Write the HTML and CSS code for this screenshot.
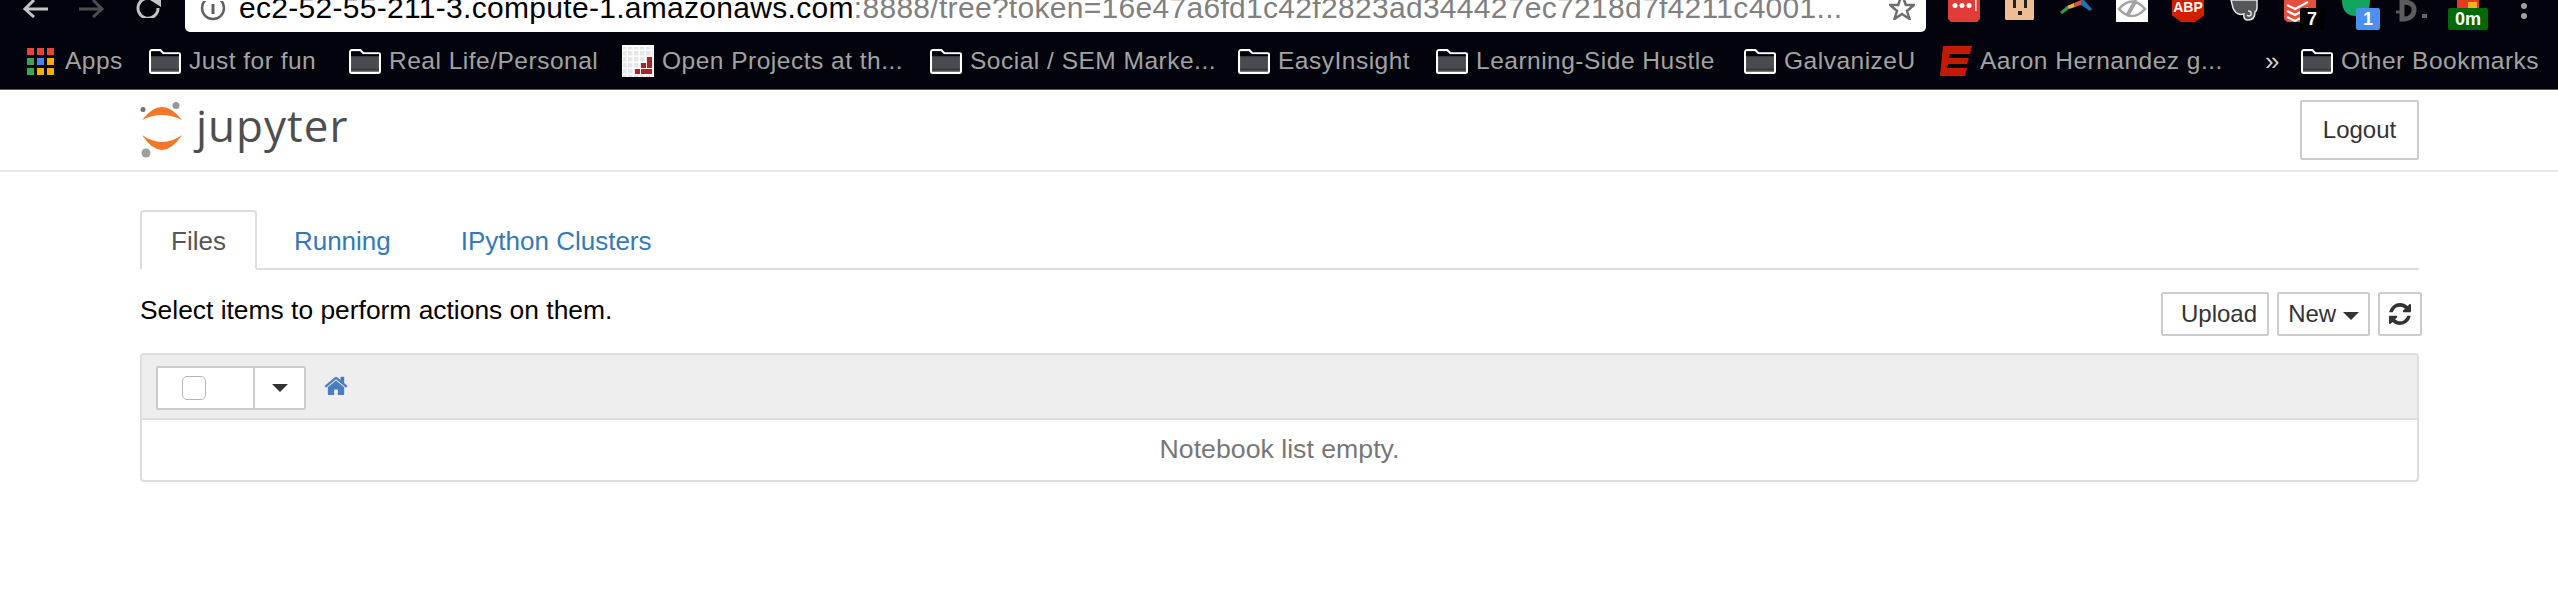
FILE: index.html
```html
<!DOCTYPE html>
<html lang="en">
<head>
    <meta charset="UTF-8">
    <title>Home - Jupyter</title>
    <link rel="stylesheet" href="styles.css">
</head>
<body>
    <svg class="defs" width="0" height="0">
        <symbol id="folder" viewBox="0 0 31 24">
            <path d="M1 3.500q0-2.500 2-2.500h8l3 3h15q1 0 1 1v17q0 1-1 1H2q-1 0-1-1z" fill="#4a4b50" stroke="#fff" stroke-width="2"/>
            <path d="M2 2h8.500l3 3H29v2H2z" fill="#02030d"/>
            <path d="M2 19h27v1H2z" fill="#2f3034"/>
        </symbol>
    </svg>

    <div class="browser">
        <div class="toolbar">
            <div class="nav">
                <svg class="nav-icon" viewBox="0 0 27 18"><path d="M26 9H3M12 0 3 9l9 8" fill="none" stroke="#c4c4c4" stroke-width="3"/></svg>
                <svg class="nav-icon" viewBox="0 0 27 18"><path d="M1 9h23M15 0l9 9-9 8" fill="none" stroke="#4d4d4d" stroke-width="3"/></svg>
                <svg class="nav-icon" viewBox="0 0 27 18"><path d="M21 3A10 10 0 1 0 24 10" transform="translate(0 -2)" fill="none" stroke="#c4c4c4" stroke-width="3"/><path d="M16 0h11v7z" fill="#c4c4c4"/></svg>
            </div>
            <div class="omnibox">
                <svg class="info" viewBox="0 0 26 20"><circle cx="13" cy="7" r="11" fill="none" stroke="#5f5f5f" stroke-width="2.500"/><path d="M11.500 3h3v10h-3z" fill="#5f5f5f"/></svg>
                <span class="url"><span class="host">ec2-52-55-211-3.compute-1.amazonaws.com</span>:8888/tree?token=16e47a6fd1c42f2823ad344427ec7218d7f4211c4001...</span>
                <svg class="star" viewBox="0 0 26 20"><path d="m13-6 3.800 11H25l-7 6 2.500 8-7.500-5-7.500 5L8 11 1 5h8.200z" fill="none" stroke="#6e6e6e" stroke-width="2.500"/></svg>
            </div>
            <div class="extensions">
                <div class="ext"><svg class="ext-svg" viewBox="0 0 32 22"><path d="M0 0h32v19l-3 3H3l-3-3z" fill="#e23c39"/><circle cx="7" cy="5.500" r="2.500" fill="#fff"/><circle cx="14" cy="5.500" r="2.500" fill="#fff"/><circle cx="21" cy="5.500" r="2.500" fill="#fff"/><path d="M27 0h1.500v11H27z" fill="#fff"/></svg></div>
                <div class="ext"><svg class="ext-svg" viewBox="0 0 32 22"><path d="M1 0h29v19l-1 1H2l-1-1z" fill="#eebd93"/><path d="M9 0h3v8H9zM20 0h3v8h-3zM14 11h4v4h-4z" fill="#222"/></svg></div>
                <div class="ext"><svg class="ext-svg" viewBox="0 0 32 22"><path d="M0 12 7 6l2 3-7 5z" fill="#2f9e5b"/><path d="M7 6l7-3 1 4-6 2z" fill="#e8b33a"/><path d="m14 3 7-3v5l-6 2z" fill="#d8503f"/><path d="M21 0h3l8 9-2 2-9-6z" fill="#1f73b5"/></svg></div>
                <div class="ext"><svg class="ext-svg" viewBox="0 0 32 22"><path d="M0 0h32v22H0z" fill="#fff"/><path d="M3 9q13-15 26 0-6 7-13 7T3 9z" fill="none" stroke="#a3a3a3" stroke-width="2.500"/><path d="M20 0 11 16" stroke="#a3a3a3" stroke-width="4"/></svg></div>
                <div class="ext"><div class="ext-abp">ABP</div></div>
                <div class="ext"><svg class="ext-svg" viewBox="0 0 32 22"><path d="M3 0h26v8q0 3-2 4 0 8-7 8-5 0-4-6-8 2-11-6z" fill="#55575a" stroke="#e6e6e6" stroke-width="1.500"/><path d="M20 11q4 0 3 4-2 2-4 0" fill="none" stroke="#e6e6e6" stroke-width="1.500"/></svg></div>
                <div class="ext">
                    <svg class="ext-svg" viewBox="0 0 32 22"><path d="M0 0h32v19l-3 3H3l-3-3z" fill="#e4503f"/><path d="m3 5 8 4 13-7M3 11l8 4 13-7M3 17l8 4 13-7" fill="none" stroke="#fff" stroke-width="2"/></svg>
                    <span class="badge badge-black">7</span>
                </div>
                <div class="ext">
                    <svg class="ext-svg" viewBox="0 0 32 22"><path d="M2 0h28q0 16-14 16T2 0z" fill="#12a55f"/></svg>
                    <span class="badge badge-blue">1</span>
                </div>
                <div class="ext"><svg class="ext-svg" viewBox="0 0 32 22"><path d="M0 12h8" stroke="#555" stroke-width="3"/><path d="M6 2h3q10 1 9 9-1 7-9 8H6z" fill="none" stroke="#5c5c5c" stroke-width="5"/><path d="M26 14h5v4h-5z" fill="#666"/></svg></div>
                <div class="ext">
                    <svg class="ext-svg" viewBox="0 0 32 22"><path d="M5 0h22v8H5z" fill="#e53b25"/><path d="M16 2h9v6h-9z" fill="#f3b51c"/></svg>
                    <span class="badge badge-green">0m</span>
                </div>
                <div class="ext"><svg class="ext-svg" viewBox="0 0 32 22"><circle cx="16" cy="6" r="3" fill="#a0a0a0"/><circle cx="16" cy="16" r="3" fill="#a0a0a0"/></svg></div>
            </div>
        </div>

        <div class="bookmarks">
            <div class="mark mark-apps">
                <div class="apps-grid">
                    <i class="c-red"></i><i class="c-red"></i><i class="c-red"></i>
                    <i class="c-green"></i><i class="c-blue"></i><i class="c-yellow"></i>
                    <i class="c-green"></i><i class="c-yellow"></i><i class="c-yellow"></i>
                </div>
                Apps
            </div>
            <div class="mark mark-fun"><svg class="folder"><use href="#folder"/></svg>Just for fun</div>
            <div class="mark mark-personal"><svg class="folder"><use href="#folder"/></svg>Real Life/Personal</div>
            <div class="mark mark-long">
                <svg class="favicon" viewBox="0 0 32 32">
                    <defs>
                        <pattern id="cells" width="6" height="6" patternUnits="userSpaceOnUse">
                            <path d="M0 0h4.500v4.500H0z" fill="#e6e6e6"/>
                        </pattern>
                    </defs>
                    <path d="M0 0h32v32H0z" fill="#fff"/>
                    <path d="M1 2h30v30H1z" fill="url(#cells)"/>
                    <path d="M25 12h5v11h-5zM19 18h5v5h-5zM19 24h11v5H19zM13 24h5v5h-5z" fill="#a82525"/>
                </svg>
                Open Projects at th...
            </div>
            <div class="mark mark-long"><svg class="folder"><use href="#folder"/></svg>Social / SEM Marke...</div>
            <div class="mark mark-easy"><svg class="folder"><use href="#folder"/></svg>EasyInsight</div>
            <div class="mark mark-long"><svg class="folder"><use href="#folder"/></svg>Learning-Side Hustle</div>
            <div class="mark mark-galv"><svg class="folder"><use href="#folder"/></svg>GalvanizeU</div>
            <div class="mark mark-aaron">
                <svg class="espn" viewBox="0 0 32 30"><path d="M3 0h29l-2 8H10l-1 4h20l-2 6H8l-1 4h20l-2 8H0z" fill="#c41a04"/></svg>
                Aaron Hernandez g...
            </div>
            <div class="more">»</div>
            <div class="mark"><svg class="folder"><use href="#folder"/></svg>Other Bookmarks</div>
        </div>
    </div>

    <div class="header">
        <div class="logo">
            <svg class="logo-mark" viewBox="0 0 44 56">
                <path d="M2 18Q22-8 42 18 22 8 2 18zM2 33Q22 63 42 33 22 47 2 33z" fill="#f37726"/>
                <circle cx="36" cy="3.500" r="3.500" fill="#989798"/>
                <circle cx="3" cy="7.500" r="2.500" fill="#6f7070"/>
                <circle cx="6" cy="51" r="4.500" fill="#9e9e9e"/>
            </svg>
            <span class="logo-text">jupyter</span>
        </div>
        <button class="btn btn-logout">Logout</button>
    </div>

    <div class="main">
        <ul class="tabs">
            <li class="tab active">Files</li>
            <li class="tab">Running</li>
            <li class="tab">IPython Clusters</li>
        </ul>

        <div class="actions">
            <span class="hint">Select items to perform actions on them.</span>
            <div class="action-btns">
                <button class="btn btn-upload">Upload</button>
                <button class="btn btn-new">New <span class="caret"></span></button>
                <button class="btn btn-refresh">
                    <svg class="refresh" viewBox="0 0 1536 1536"><path fill="#333" d="M1511 928q0 5-1 7-64 268-268 434.500t-478 166.500q-146 0-282.500-55t-243.500-157l-129 129q-19 19-45 19t-45-19-19-45v-448q0-26 19-45t45-19h448q26 0 45 19t19 45-19 45l-137 137q71 66 161 102t187 36q134 0 250-65t186-179q11-17 53-117 8-23 30-23h192q13 0 22.500 9.500t9.500 22.500zm25-800v448q0 26-19 45t-45 19h-448q-26 0-45-19t-19-45 19-45l138-138q-148-137-349-137-134 0-250 65t-186 179q-11 17-53 117-8 23-30 23h-199q-13 0-22.500-9.500t-9.500-22.500v-7q65-268 270-434.500t480-166.500q146 0 284 55.500t245 156.500l130-129q19-19 45-19t45 19 19 45z"/></svg>
                </button>
            </div>
        </div>

        <div class="panel">
            <div class="panel-head">
                <div class="select-group">
                    <div class="select-box"><span class="checkbox"></span></div>
                    <div class="select-drop"><span class="caret"></span></div>
                </div>
                <svg class="home" viewBox="0 128 1664 1408"><path fill="#4a7dbd" d="M1408 992v480q0 26-19 45t-45 19h-384v-384h-256v384h-384q-26 0-45-19t-19-45v-480q0-1 .5-3t.5-3l575-474 575 474q1 2 1 6zm223-69l-62 74q-8 9-21 11h-3q-13 0-21-7l-692-577-692 577q-12 8-24 7-13-2-21-11l-62-74q-8-10-7-23.500t11-21.500l719-599q32-26 76-26t76 26l244 204v-195q0-14 9-23t23-9h192q14 0 23 9t9 23v408l219 182q10 8 11 21.500t-7 23.500z"/></svg>
            </div>
            <div class="panel-body">Notebook list empty.</div>
        </div>
    </div>
</body>
</html>
```

FILE: styles.css
```css
* {
    box-sizing: border-box;
}

body {
    margin: 0;
    background-color: #fff;
    font-family: "Liberation Sans", Arial, sans-serif;
    color: #000;
    overflow: hidden;
}

.defs {
    display: block;
    height: 0;
}

/* browser chrome */
.browser {
    background-color: #02030d;
    height: 90px;
    border-bottom: 1px solid #5a5a5a;
}

.toolbar {
    display: flex;
    align-items: flex-end;
    height: 33px;
    overflow: hidden;
}

.nav {
    display: flex;
    align-items: flex-start;
    width: 185px;
    height: 33px;
    padding-left: 22px;
    gap: 29px;
}

.nav-icon {
    width: 27px;
    height: 18px;
}

.omnibox {
    display: flex;
    align-items: flex-end;
    width: 1741px;
    height: 60px;
    margin-bottom: 1px;
    padding: 0 11px 7px 15px;
    background-color: #fff;
    border-radius: 0 0 5px 5px;
}

.info {
    width: 26px;
    height: 20px;
    margin-bottom: 4px;
}

.url {
    margin-left: 13px;
    font-size: 30px;
    line-height: 34px;
    white-space: nowrap;
    letter-spacing: 0.3px;
    color: #808080;
}

.host {
    color: #000;
}

.star {
    width: 26px;
    height: 20px;
    margin-left: auto;
    margin-bottom: 5px;
}

.extensions {
    display: flex;
    margin-left: 10px;
    height: 33px;
}

.ext {
    position: relative;
    display: flex;
    justify-content: center;
    width: 56px;
}

.ext-svg {
    width: 32px;
    height: 22px;
}

.ext-abp {
    width: 32px;
    height: 22px;
    background-color: #d51e00;
    clip-path: polygon(0 0, 100% 0, 100% 70%, 72% 100%, 28% 100%, 0 70%);
    color: #fff;
    font-size: 14px;
    font-weight: bold;
    line-height: 15px;
    text-align: center;
}

.badge {
    position: absolute;
    top: 8px;
    height: 22px;
    border-radius: 2px;
    color: #fff;
    font-size: 18px;
    font-weight: bold;
    line-height: 22px;
    text-align: center;
}

.badge-black {
    left: 28px;
    width: 24px;
    background-color: #000;
}

.badge-blue {
    left: 28px;
    width: 24px;
    background-color: #4a90f0;
}

.badge-green {
    left: 8px;
    width: 40px;
    background-color: #006b06;
}

.bookmarks {
    display: flex;
    align-items: center;
    height: 56px;
    padding-left: 27px;
}

.mark {
    display: flex;
    flex: none;
    align-items: center;
    gap: 8px;
    color: #a3a3a3;
    font-size: 24.500px;
    letter-spacing: 0.5px;
    white-space: nowrap;
}

.mark-apps {
    gap: 11px;
    width: 122px;
}

.mark-fun { width: 200px; }
.mark-personal { width: 273px; }
.mark-long { width: 308px; }
.mark-easy { width: 198px; }
.mark-galv { width: 196px; }
.mark-aaron { width: 325px; }

.apps-grid {
    display: grid;
    grid-template-columns: repeat(3, 7px);
    gap: 3px;
}

.apps-grid i {
    display: block;
    height: 7px;
}

.c-red { background-color: #ea4335; }
.c-green { background-color: #34a853; }
.c-blue { background-color: #4285f4; }
.c-yellow { background-color: #f9ab00; }

.folder {
    width: 32px;
    height: 25px;
}

.favicon {
    width: 32px;
    height: 32px;
}

.espn {
    width: 32px;
    height: 30px;
}

.more {
    width: 36px;
    color: #d0d0d0;
    font-size: 26px;
}

/* jupyter page */
.header {
    display: flex;
    justify-content: space-between;
    align-items: flex-start;
    height: 82px;
    padding: 10px 139px 0 140px;
    border-bottom: 2px solid #e7e7e7;
}

.logo {
    display: flex;
    align-items: flex-start;
}

.logo-mark {
    width: 44px;
    height: 56px;
    margin-top: 2px;
}

.logo-text {
    margin-left: 12px;
    margin-top: -3px;
    font-family: "Open Sans", sans-serif;
    font-size: 44px;
    line-height: 56px;
    color: #4e4e4e;
    letter-spacing: 1px;
}

.btn {
    background-color: #fff;
    border: 2px solid #ccc;
    border-radius: 2px;
    color: #333;
    font-family: "Liberation Sans", Arial, sans-serif;
    font-size: 24px;
    padding: 0;
}

.btn-logout {
    width: 119px;
    height: 60px;
}

.main {
    padding: 38px 139px 0 140px;
}

.tabs {
    display: flex;
    height: 60px;
    margin: 0;
    padding: 0;
    list-style: none;
    border-bottom: 2px solid #ddd;
}

.tab {
    height: 60px;
    padding: 0 33px;
    color: #337ab7;
    font-size: 26px;
    line-height: 62px;
}

.tab.active {
    border: 2px solid #ddd;
    border-bottom-color: #fff;
    border-radius: 4px 4px 0 0;
    color: #555;
    line-height: 58px;
    padding: 0 29px;
}

.tab + .tab {
    margin-left: 4px;
}

.actions {
    display: flex;
    justify-content: space-between;
    align-items: center;
    height: 44px;
    margin-top: 22px;
    margin-right: -3px;
}

.hint {
    font-size: 26.400px;
    margin-top: -8px;
}

.action-btns {
    display: flex;
    gap: 8px;
}

.btn-upload {
    width: 108px;
    height: 44px;
    padding-left: 8px;
}

.btn-new {
    width: 93px;
    height: 44px;
}

.btn-refresh {
    display: flex;
    justify-content: center;
    align-items: center;
    width: 44px;
    height: 44px;
}

.refresh {
    width: 22px;
    height: 22px;
}

.caret {
    display: inline-block;
    width: 0;
    height: 0;
    vertical-align: middle;
    border-top: 8px solid #333;
    border-left: 8px solid transparent;
    border-right: 8px solid transparent;
}

.panel {
    margin-top: 17px;
    height: 129px;
    border: 2px solid #ddd;
    border-radius: 4px;
}

.panel-head {
    display: flex;
    align-items: flex-start;
    height: 65px;
    padding: 11px 14px 0;
    background-color: #eee;
    border-bottom: 2px solid #ddd;
}

.select-group {
    display: flex;
    height: 44px;
    background-color: #fff;
    border: 2px solid #ccc;
    border-radius: 2px;
}

.select-box {
    display: flex;
    align-items: center;
    width: 97px;
    padding-left: 24px;
    border-right: 2px solid #ccc;
}

.checkbox {
    width: 24px;
    height: 24px;
    background-color: #fff;
    border: 1px solid #b5b5b5;
    border-radius: 5px;
}

.select-drop {
    display: flex;
    justify-content: center;
    align-items: center;
    width: 49px;
}

.home {
    width: 24px;
    height: 20px;
    margin: 9px 0 0 18px;
}

.panel-body {
    padding-top: 14px;
    color: #777;
    font-size: 26.700px;
    text-align: center;
}
```
